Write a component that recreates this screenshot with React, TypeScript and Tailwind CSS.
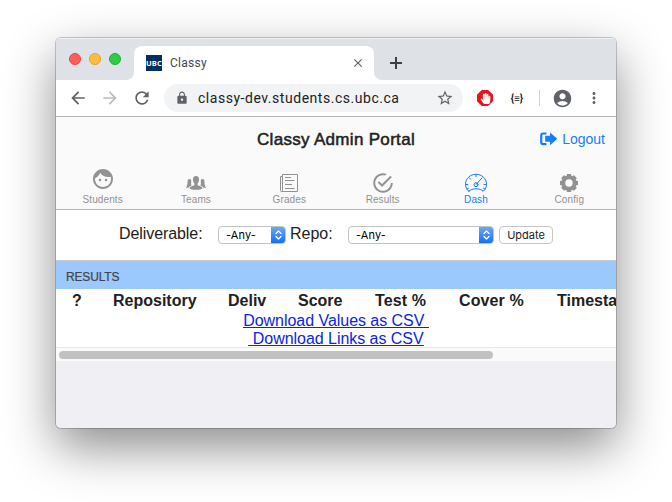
import React from "react";
import { MdFace, MdAccountCircle, MdLock, MdRefresh, MdArrowBack, MdArrowForward, MdStarBorder, MdClose, MdMoreVert } from "react-icons/md";
import { IoMdCheckmarkCircleOutline } from "react-icons/io";
import { FaHandPaper } from "react-icons/fa";

const gearTeeth = [0, 45, 90, 135, 180, 225, 270, 315];

function PeopleIcon() {
  return (
    <svg width="22" height="16" viewBox="0 0 22 16" fill="currentColor">
      <path d="M11 1c-2.100 0-3.100 1.400-3.100 3.300 0 1.900.7 3.300 1.500 4.200v1.600c0 .8-4.600 1.100-4.900 3.100-.1.900 2 1.500 6.500 1.500s6.600-.6 6.500-1.500c-.3-2-4.900-2.300-4.900-3.100V8.500c.8-.9 1.500-2.300 1.500-4.200C14.100 2.400 13.100 1 11 1z" />
      <path d="M4.700 4C3 4 2.500 5.300 2.500 7c0 2.100-.2 3-1 3.800.5.500 1 .5 1 .5-.8.4-1.500.7-1.500 1.500h2.700c.5-1.200 1.500-1.900 2.900-2.400-.4-.4-.6-1.300-.4-3.300C6.400 5.200 6.100 4 4.700 4z" />
      <path d="M17.300 4c1.700 0 2.200 1.300 2.200 3 0 2.100.2 3 1 3.800-.5.500-1 .5-1 .5.8.4 1.500.7 1.500 1.500h-2.700c-.5-1.200-1.500-1.900-2.900-2.400.4-.4.6-1.300.4-3.300-.2-1.900.1-3.100 1.500-3.100z" />
    </svg>
  );
}

function PaperIcon() {
  return (
    <svg width="20" height="20" viewBox="0 0 20 20" fill="none" stroke="currentColor" strokeWidth="1">
      <path d="M3.500 1.500h15v17h-16c-.7 0-1-.4-1-1V3.500h2M3.500 1.500v15.500c0 1-.4 1.500-1 1.500" />
      <path d="M6 4.500h6M6 7.500h9.500M6 11.500h7M6 15.500h9.500" />
    </svg>
  );
}

function SpeedIcon() {
  return (
    <svg width="24" height="20" viewBox="0 0 24 20" fill="none" stroke="currentColor" strokeWidth="1" strokeLinecap="round">
      <path d="M4.800 18.300C2.700 16.500 1.500 14 1.500 11.200 1.500 5.500 6.200 1.300 12 1.300s10.500 4.200 10.500 9.900c0 2.800-1.200 5.300-3.300 7.100-1.900-1.800-4.400-2.500-7.200-2.500s-5.300.7-7.200 2.500z" />
      <circle cx="12" cy="11.700" r="2" />
      <path d="M12.200 11.200l5.800-6.200M12 2v1.700M5.200 4.800l1.300 1.300M2.200 11.500h1.700M20 11.500h1.700M3 16l1.500-.8M21 16l-1.500-.8" />
    </svg>
  );
}

function GearIcon() {
  return (
    <svg width="20" height="20" viewBox="-10 -10 20 20" fill="currentColor">
      {gearTeeth.map((a) => (
        <path key={a} d="M-2.700-6L-2-9h4l.7 3z" transform={`rotate(${a})`} />
      ))}
      <circle r="5.600" fill="none" stroke="currentColor" strokeWidth="3.800" />
    </svg>
  );
}

function LogoutIcon() {
  return (
    <svg width="17" height="14" viewBox="0 0 17 14" fill="currentColor">
      <path d="M6.500 1.500H3.200C2 1.500 1.200 2.200 1.200 3.400v6.900c0 1.200.8 1.900 2 1.900h3.300" fill="none" stroke="currentColor" strokeWidth="2.200" />
      <path d="M10 .4v3.400H5.200v6h4.800v3.400L17.200 6.800z" />
    </svg>
  );
}

function Tab({ label, icon, active = false }: { label: string; icon: React.ReactNode; active?: boolean }) {
  return (
    <div className={`flex flex-1 flex-col items-center ${active ? "text-[#167efb]" : "text-[#929292]"}`}>
      <div className="flex h-[29px] items-center justify-center">{icon}</div>
      <span className="text-[10px] leading-3 tracking-[0.1px]">{label}</span>
    </div>
  );
}

function Select({ width }: { width: string }) {
  return (
    <div className={`flex h-[18px] overflow-hidden rounded-[4px] border border-[#c2c2c2] bg-white text-black ${width}`}>
      <span className="flex-1 pl-[7px] font-[Inter] text-[11px] leading-4 tracking-[0.1px]">-Any-</span>
      <span className="-my-px -mr-px flex w-[15px] items-center justify-center bg-linear-to-b from-[#69acfa] to-[#1268f8]">
        <svg width="9" height="12" viewBox="0 0 9 12" fill="none" stroke="white" strokeWidth="1.400" strokeLinecap="round" strokeLinejoin="round">
          <path d="M2 4.500L4.500 2 7 4.500M2 7.500L4.500 10 7 7.500" />
        </svg>
      </span>
    </div>
  );
}

export default function App() {
  return (
    <div className="flex h-[502px] w-[672px] justify-center overflow-hidden bg-white pt-[38px] font-['Liberation_Sans',sans-serif] text-[#212121]">
      <div className="h-[390px] w-[560px] rounded-[5px] shadow-[0_0_0_1px_rgba(0,0,0,0.2),0_19px_50px_rgba(0,0,0,0.46)]">
        <div className="flex h-[390px] flex-col overflow-hidden rounded-[5px] bg-[#efeff4]">
          <div className="flex h-[42px] shrink-0 items-end border-t border-[#f0f1f3] bg-[#dee1e6]">
            <div className="flex h-full w-[70px] items-center gap-2 pb-px pl-[13px]">
              <i className="size-3 rounded-full border border-[#e2463f] bg-[#ff5f57]" />
              <i className="size-3 rounded-full border border-[#e1a02f] bg-[#ffbd3e]" />
              <i className="size-3 rounded-full border border-[#1dad2b] bg-[#30cb48]" />
            </div>
            <div className="h-2 w-2 bg-[radial-gradient(circle_at_0_0,#dee1e6_7.500px,white_8.500px)]" />
            <div className="flex h-[34px] w-[240px] items-center rounded-t-[8px] bg-white pl-3">
              <span className="flex size-4 items-center justify-center bg-[#002f63] pt-px font-['Open_Sans'] text-[7.500px] leading-none font-bold tracking-[0.2px] text-white">UBC</span>
              <span className="ml-2 flex-1 font-[Roboto] text-[12px] tracking-[0.25px] text-[#45494d]">Classy</span>
              <MdClose className="mr-[9px] size-[14px] text-[#5f6368]" />
            </div>
            <div className="h-2 w-2 bg-[radial-gradient(circle_at_100%_0,#dee1e6_7.500px,white_8.500px)]" />
            <svg className="mb-[11px] ml-2 text-[#3c4043]" width="12" height="12" viewBox="0 0 12 12" stroke="currentColor" strokeWidth="2">
              <path d="M6 0v12M0 6h12" />
            </svg>
          </div>

          <div className="flex h-[37px] shrink-0 items-center border-b border-[#b5b5b5] bg-white pl-[12px] text-[#5f6368]">
            <MdArrowBack className="size-[20px]" />
            <MdArrowForward className="ml-[12px] size-[20px] text-[#babcbe]" />
            <MdRefresh className="ml-[12px] size-[20px]" />
            <div className="ml-3 flex h-7 w-[299px] items-center rounded-full bg-[#f1f3f4] pl-[11px]">
              <MdLock className="size-[14px]" />
              <span className="ml-[9px] flex-1 font-[Roboto] text-[14px] tracking-[0.53px] text-[#202124]">classy-dev.students.cs.ubc.ca</span>
              <MdStarBorder className="mr-[9px] size-[18px]" />
            </div>
            <span className="ml-[14px] flex size-4 items-center justify-center bg-[#e8141c] text-white [clip-path:polygon(30%_0,70%_0,100%_30%,100%_70%,70%_100%,30%_100%,0_70%,0_30%)]">
              <FaHandPaper className="size-[11px]" />
            </span>
            <span className="ml-4 w-4 text-center font-[Roboto] text-[10px] font-bold whitespace-nowrap text-[#202124]">{"{≡}"}</span>
            <span className="ml-[14px] h-4 w-px bg-[#cfd1d4]" />
            <MdAccountCircle className="ml-[12px] size-[21px]" />
            <MdMoreVert className="ml-[12px] size-[18px]" />
          </div>

          <header className="flex h-[93px] shrink-0 flex-col border-b border-[#b8b8b8] bg-[#fafafa]">
            <div className="grid h-[44px] grid-cols-[1fr_auto_1fr] items-center">
              <span />
              <h1 className="pt-px text-[17px] font-normal tracking-[0.31px] [-webkit-text-stroke:0.5px_#212121]">Classy Admin Portal</h1>
              <div className="flex items-center justify-end pr-[11px] text-[#167efb]">
                <LogoutIcon />
                <span className="ml-[5px] text-[14px] leading-5">Logout</span>
              </div>
            </div>
            <nav className="flex pt-[4px]">
              <Tab label="Students" icon={<MdFace className="mb-[2px] size-6" />} />
              <Tab label="Teams" icon={<div className="pt-[7px]"><PeopleIcon /></div>} />
              <Tab label="Grades" icon={<div className="pt-[6px]"><PaperIcon /></div>} />
              <Tab label="Results" icon={<IoMdCheckmarkCircleOutline className="mt-[6px] size-6" />} />
              <Tab label="Dash" active icon={<div className="pt-[6px]"><SpeedIcon /></div>} />
              <Tab label="Config" icon={<div className="pt-[6px]"><GearIcon /></div>} />
            </nav>
          </header>

          <section className="flex h-[51px] shrink-0 items-center border-b border-[#c8c7cc] bg-white pl-[63px] text-[16px]">
            <span className="w-[99px] pb-[3px] tracking-[-0.08px]">Deliverable:</span>
            <Select width="w-[68px]" />
            <span className="ml-1 w-[58px] pb-[3px]">Repo:</span>
            <Select width="w-[146px]" />
            <button className="ml-[5px] h-[18px] w-[54px] rounded-[4px] border border-[#c6c6c6] bg-white font-[Inter] text-[11px] leading-4">Update</button>
          </section>

          <div className="flex h-7 shrink-0 items-center bg-[#9bc8fd] pt-[3px] pl-[10px] text-[12px] tracking-[-0.15px] text-[#444] [-webkit-text-stroke:0.2px_#444]">RESULTS</div>

          <section className="h-[58px] shrink-0 bg-white pt-[3px]">
            <div className="flex h-[20px] text-[16px] leading-[18px] font-bold whitespace-nowrap">
              <span className="w-[57px] shrink-0 pl-4">?</span>
              <span className="w-[115px] shrink-0">Repository</span>
              <span className="w-[70px] shrink-0">Deliv</span>
              <span className="w-[77px] shrink-0">Score</span>
              <span className="w-[84px] shrink-0 tracking-[0.1px]">Test %</span>
              <span className="w-[98px] shrink-0 tracking-[0.1px]">Cover %</span>
              <span className="shrink-0">Timestamp</span>
            </div>
            <div className="flex flex-col items-center text-[16px] leading-[18px] tracking-[-0.04px] whitespace-pre text-[#0b24e8] underline">
              <a>{"Download Values as CSV\u00a0"}</a>
              <a>{"\u00a0Download Links as CSV"}</a>
            </div>
          </section>
          <div className="flex h-[14px] shrink-0 items-center border-t border-[#e8e8e8] bg-[#fafafa] pl-[3px]">
            <div className="h-2 w-[434px] rounded-full bg-[#c1c1c1]" />
          </div>
        </div>
      </div>
    </div>
  );
}
